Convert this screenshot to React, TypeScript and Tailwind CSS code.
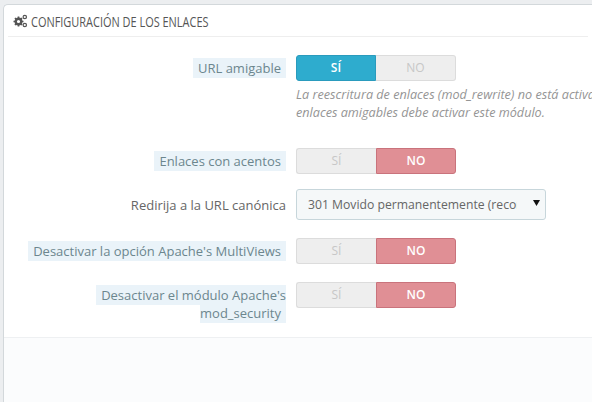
import type { ReactNode } from 'react'

function Gears() {
  return (
    <svg width="15" height="14" viewBox="0 0 15 14" className="shrink-0">
      <g fill="none" stroke="#555" strokeLinecap="butt">
        <circle cx="5.5" cy="7.5" r="2.8" strokeWidth="2.4" />
        <path d="M5.5 2.5v2M5.5 10.5v2M.5 7.5h2M8.5 7.5h2M2 4l1.4 1.4M7.6 9.6L9 11M2 11l1.4-1.4M7.6 5.4L9 4" strokeWidth="1.7" />
        <circle cx="11.8" cy="3" r="1.7" strokeWidth="1.2" />
        <circle cx="11.8" cy="11" r="1.7" strokeWidth="1.2" />
      </g>
    </svg>
  )
}

function Toggle({ on }: { on: boolean }) {
  return (
    <div className="flex h-[26px] w-[160px] text-[12px] font-semibold leading-[26px] text-center">
      <div className={on
        ? 'w-[80px] rounded-l-[3px] border border-[#2a9bbd] bg-[#2eacce] text-white leading-[24px]'
        : 'w-[80px] rounded-l-[3px] border border-r-0 border-[#dcdcdc] bg-[#eeeeee] text-[#c7c7c7] font-normal leading-[24px]'}>
        SÍ
      </div>
      <div className={on
        ? 'w-[80px] rounded-r-[3px] border border-l-0 border-[#dcdcdc] bg-[#eeeeee] text-[#c7c7c7] font-normal leading-[24px]'
        : 'w-[80px] rounded-r-[3px] border border-[#c9737c] bg-[#e08f95] text-white leading-[24px]'}>
        NO
      </div>
    </div>
  )
}

function Row({ label, hint, top, className, children }: { label: ReactNode; hint?: boolean; top?: boolean; className?: string; children: ReactNode }) {
  return (
    <div className={`flex ${className ?? ''}`}>
      <div className={`w-[282px] shrink-0 pl-[20px] text-right text-[13px] leading-[18px] ${top ? 'pt-[4px]' : ''}`}>
        {hint
          ? <span className="bg-[#eaf3f9] px-[5px] py-[1px] text-[#6c868e]">{label}</span>
          : <span className="text-[#666]">{label}</span>}
      </div>
      <div className="ml-[10px] min-w-0 flex-1">{children}</div>
    </div>
  )
}

export default function App() {
  return (
    <div className="h-[402px] w-[592px] overflow-hidden bg-[#eceef0] pl-[3px] pt-[4px] font-['Open_Sans',sans-serif]">
      <div className="flex h-[398px] flex-col rounded-tl-[5px] border-l border-t border-[#d3d8db] bg-white">
        <div className="mx-[4px] flex h-[32px] items-center gap-[3px] border-b border-[#eeeeee] pl-[5px] text-[#555]">
          <Gears />
          <span className="origin-left scale-x-[0.73] whitespace-nowrap text-[15px] leading-[20px]">CONFIGURACIÓN DE LOS ENLACES</span>
        </div>

        <div className="h-[300px] overflow-hidden">
          <Row hint top label="URL amigable" className="mt-[18px] items-start">
            <Toggle on />
            <p className="mt-[4px] whitespace-nowrap text-[12.65px] italic leading-[18px] text-[#959595]">
              La reescritura de enlaces (mod_rewrite) no está activada. Para utilizar
              <br />
              enlaces amigables debe activar este módulo.
            </p>
          </Row>
          <Row hint label="Enlaces con acentos" className="mt-[27px] items-center">
            <Toggle on={false} />
          </Row>
          <Row label="Redirija a la URL canónica" className="mt-[15px] items-center">
            <div className="relative h-[31px] w-[250px] rounded-[3px] border border-[#c7d6db] bg-[#f5f8f9] pl-[11px] text-[12.2px] leading-[30px] text-[#666]">
              <span className="block w-[209px] overflow-hidden whitespace-nowrap">301 Movido permanentemente (recomendado)</span>
              <svg width="7" height="6" viewBox="0 0 7 6" className="absolute right-[5px] top-[10px]">
                <path d="M0 0h7L3.5 6z" fill="#111" />
              </svg>
            </div>
          </Row>
          <Row hint label="Desactivar la opción Apache's MultiViews" className="mt-[18px] items-center">
            <Toggle on={false} />
          </Row>
          <Row hint top label="Desactivar el módulo Apache's mod_security" className="mt-[18px] items-start">
            <Toggle on={false} />
          </Row>
        </div>

        <div className="flex-1 border-t border-[#eef0f2] bg-[#fbfcfd]" />
      </div>
    </div>
  )
}
